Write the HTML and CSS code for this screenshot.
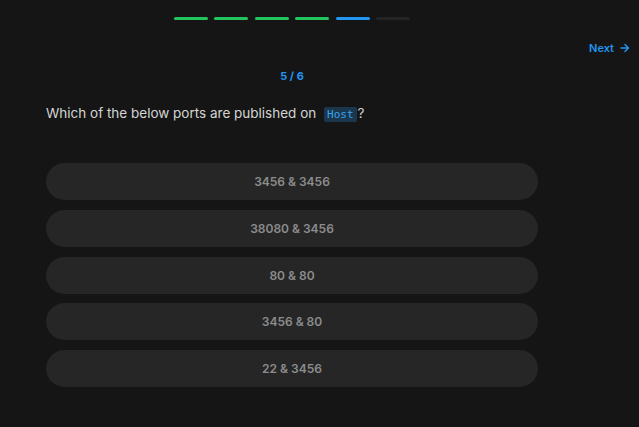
FILE: index.html
```html
<!DOCTYPE html>
<html>
<head>
<meta charset="utf-8">
<link rel="stylesheet" href="styles.css">
</head>
<body>
<div class="page">
  <div class="progress">
    <span class="seg done"></span>
    <span class="seg done"></span>
    <span class="seg done"></span>
    <span class="seg done"></span>
    <span class="seg current"></span>
    <span class="seg"></span>
  </div>
  <div class="topnav">
    <a class="next">Next
      <svg class="arrow" width="10" height="10" viewBox="0 0 10 10"><path d="M1 5H8.5M5 1.5L8.5 5L5 8.5" fill="none" stroke="#2196f3" stroke-width="1.4" stroke-linecap="round" stroke-linejoin="round"/></svg>
    </a>
  </div>
  <div class="main">
    <div class="counter">5 / 6</div>
    <div class="question">Which of the below ports are published on <code class="code">Host</code>?</div>
    <div class="options">
      <button class="option">3456 &amp; 3456</button>
      <button class="option">38080 &amp; 3456</button>
      <button class="option">80 &amp; 80</button>
      <button class="option">3456 &amp; 80</button>
      <button class="option">22 &amp; 3456</button>
    </div>
  </div>
</div>
</body>
</html>
```
FILE: styles.css
```css
html, body {
  margin: 0;
  padding: 0;
  background: #151515;
  font-family: Inter, "Noto Sans", sans-serif;
}
.page {
  width: 639px;
  height: 427px;
  box-sizing: border-box;
  padding-top: 17px;
}
.progress {
  margin-left: 46px;
  width: 492px;
  display: flex;
  justify-content: center;
  gap: 6.4px;
}
.seg {
  width: 34px;
  height: 3px;
  border-radius: 2px;
  background: #242424;
}
.seg.done { background: #22c55e; }
.seg.current { background: #2196f3; }
.topnav {
  margin-top: 20px;
  display: flex;
  justify-content: flex-end;
  padding-right: 9px;
  line-height: 16px;
  height: 16px;
}
.next {
  color: #2196f3;
  font-size: 11px;
  font-weight: 600;
  display: flex;
  align-items: center;
  gap: 6px;
}
.arrow { display: block; }
.main {
  margin-left: 46px;
  width: 492px;
}
.counter {
  margin-top: 12px;
  text-align: center;
  color: #2196f3;
  font-size: 11px;
  font-weight: 700;
  line-height: 16px;
}
.question {
  margin-top: 19px;
  color: #d4d4d4;
  font-size: 13.5px;
  line-height: 20px;
}
.code {
  font-family: "DejaVu Sans Mono", monospace;
  font-size: 11px;
  color: #3ba3ee;
  background: #1a374d;
  padding: 1px 3px;
  border-radius: 2px;
  margin-left: 4px;
  margin-right: 1px;
}
.options {
  margin-top: 38px;
  display: flex;
  flex-direction: column;
  gap: 9.75px;
}
.option {
  height: 37px;
  border: none;
  border-radius: 19px;
  background: #262626;
  color: #8c8c8c;
  font-family: Inter, "Noto Sans", sans-serif;
  font-size: 12px;
  font-weight: 600;
  padding: 0;
}
```
